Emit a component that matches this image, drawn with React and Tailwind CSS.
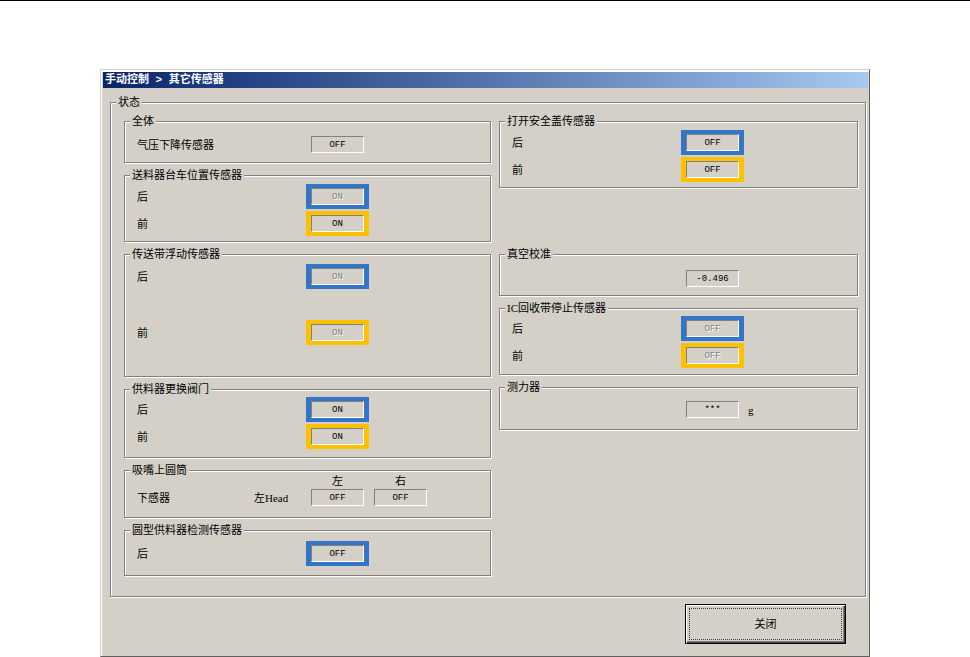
import React, { useId } from 'react';
import clsx from 'clsx';

const FRAMES = {
  blue: 'border-[#3575c8]',
  amber: 'border-[#ffc000]',
};

/** Sunken status readout, optionally inside a coloured frame. */
function Readout({ id, value, frame, disabled, label }) {
  return (
    <span
      className={clsx(
        'inline-block border-x-5 border-y-4',
        frame ? FRAMES[frame] : 'border-transparent'
      )}
    >
      <output
        id={id}
        aria-label={label}
        className={clsx(
          "flex h-[17px] w-[53px] items-center justify-center border border-t-[#808080] border-l-[#808080] border-r-white border-b-white font-['Liberation_Mono',monospace] text-[9px] leading-3",
          disabled ? 'text-[#808080] [text-shadow:1px_1px_0_#fff]' : 'text-black'
        )}
      >
        {value}
      </output>
    </span>
  );
}

function Group({ title, className, children }) {
  return (
    <fieldset
      className={clsx(
        'min-w-0 border border-[#808080] shadow-[1px_1px_0_#fff,inset_1px_1px_0_#fff]',
        className
      )}
    >
      <legend className="ml-[5px] bg-[#d4d0c8] px-0.5 leading-3">{title}</legend>
      {children}
    </fieldset>
  );
}

function Row({ label, value, frame, disabled, unit }) {
  const id = useId();
  return (
    <div className="grid grid-cols-[181px_1fr] items-center">
      <label htmlFor={id} className="pl-3 leading-3">{label}</label>
      <div className="flex items-center">
        <Readout id={id} value={value} frame={frame} disabled={disabled} label={label ? undefined : value} />
        {unit && <span className="ml-1 leading-3">{unit}</span>}
      </div>
    </div>
  );
}

function TitleBar() {
  return (
    <header className="flex h-4 items-center bg-linear-to-r from-[#0a246a] to-[#a6caf0] px-0.5">
      <h1 className="font-['Liberation_Mono','Noto_Sans_CJK_SC',monospace] font-bold leading-4 text-white">
        手动控制 &gt; 其它传感器
      </h1>
    </header>
  );
}

export default function App() {
  return (
    <div className="flex min-h-screen flex-col border-t border-black bg-white px-[100px] pt-[68px] font-['Liberation_Serif','Noto_Sans_CJK_SC',serif] text-[11px] text-black">
      <main className="flex flex-1 flex-col border border-t-[#d4d0c8] border-l-[#d4d0c8] border-r-[#606060] border-b-[#606060] bg-[#d4d0c8]">
        <div className="flex-1 border-t-2 border-l border-white px-px">
          <TitleBar />

          <div className="px-[7px] pr-0.5 pt-2">
            <Group title="状态" className="pb-5">
              <div className="grid grid-cols-[367fr_359fr] items-start gap-2 pt-[7px] pr-[7px] pl-[13px]">
                {/* Left column */}
                <div className="flex flex-col gap-1.5">
                  <Group title="全体" className="pt-[5px] pb-[5px]">
                    <Row label="气压下降传感器" value="OFF" />
                  </Group>

                  <Group title="送料器台车位置传感器" className="pt-[3px] pb-[5px]">
                    <div className="flex flex-col gap-0.5">
                      <Row label="后" value="ON" frame="blue" disabled />
                      <Row label="前" value="ON" frame="amber" />
                    </div>
                  </Group>

                  <Group title="传送带浮动传感器" className="pt-1 pb-[31px]">
                    <div className="flex flex-col gap-[31px]">
                      <Row label="后" value="ON" frame="blue" disabled />
                      <Row label="前" value="ON" frame="amber" disabled />
                    </div>
                  </Group>

                  <Group title="供料器更换阀门" className="pt-0.5 pb-2">
                    <div className="flex flex-col gap-0.5">
                      <Row label="后" value="ON" frame="blue" />
                      <Row label="前" value="ON" frame="amber" />
                    </div>
                  </Group>

                  <Group title="吸嘴上圆筒" className="pt-px pb-[7px]">
                    <table className="border-collapse leading-3">
                      <thead>
                        <tr className="h-2">
                          <td className="w-[129px] p-0" />
                          <td className="w-[52px] p-0" />
                          <th scope="col" className="w-[61px] p-0 text-center font-normal leading-2">左</th>
                          <th scope="col" className="w-[61px] p-0 text-center font-normal leading-2">右</th>
                        </tr>
                      </thead>
                      <tbody>
                        <tr>
                          <th scope="row" className="p-0 pl-3 text-left font-normal">下感器</th>
                          <td className="p-0">左Head</td>
                          <td className="p-0"><Readout value="OFF" label="左" /></td>
                          <td className="p-0"><Readout value="OFF" label="右" /></td>
                        </tr>
                      </tbody>
                    </table>
                  </Group>

                  <Group title="圆型供料器检测传感器" className="pt-[5px] pb-[9px]">
                    <Row label="后" value="OFF" frame="blue" />
                  </Group>
                </div>

                {/* Right column */}
                <div className="flex flex-col gap-1.5">
                  <Group title="打开安全盖传感器" className="mb-[54px] pt-[3px] pb-[5px]">
                    <div className="flex flex-col gap-0.5">
                      <Row label="后" value="OFF" frame="blue" />
                      <Row label="前" value="OFF" frame="amber" />
                    </div>
                  </Group>

                  <Group title="真空校准" className="pt-1.5 pb-1">
                    <Row value="-0.496" />
                  </Group>

                  <Group title="IC回收带停止传感器" className="pt-0.5 pb-1.5">
                    <div className="flex flex-col gap-0.5">
                      <Row label="后" value="OFF" frame="blue" disabled />
                      <Row label="前" value="OFF" frame="amber" disabled />
                    </div>
                  </Group>

                  <Group title="测力器" className="pt-1 pb-[7px]">
                    <Row value="***" unit="g" />
                  </Group>
                </div>
              </div>
            </Group>
          </div>

          <footer className="flex justify-end pt-[7px] pr-[22px] pb-2.5">
            <button
              type="button"
              className="h-10 w-[161px] border border-black p-0 shadow-[inset_1px_1px_0_#fff,inset_-1px_-1px_0_#404040,inset_-2px_-2px_0_#808080]"
            >
              <span className="m-[3px] flex h-8 items-center justify-center border border-dotted border-[#404040]">
                关闭
              </span>
            </button>
          </footer>
        </div>
      </main>
    </div>
  );
}
